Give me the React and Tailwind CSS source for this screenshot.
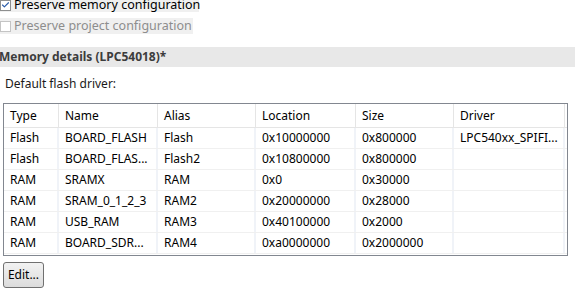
import { Check } from "lucide-react";

const columns = [
  { label: "Type", w: "w-[55px]" },
  { label: "Name", w: "w-[99px]" },
  { label: "Alias", w: "w-[98px]" },
  { label: "Location", w: "w-[100px]" },
  { label: "Size", w: "w-[98px]" },
  { label: "Driver", w: "w-[111px]" },
];

const rows = [
  ["Flash", "BOARD_FLASH", "Flash", "0x10000000", "0x800000", "LPC540xx_SPIFI..."],
  ["Flash", "BOARD_FLAS...", "Flash2", "0x10800000", "0x800000", ""],
  ["RAM", "SRAMX", "RAM", "0x0", "0x30000", ""],
  ["RAM", "SRAM_0_1_2_3", "RAM2", "0x20000000", "0x28000", ""],
  ["RAM", "USB_RAM", "RAM3", "0x40100000", "0x2000", ""],
  ["RAM", "BOARD_SDR...", "RAM4", "0xa0000000", "0x2000000", ""],
];

export default function App() {
  return (
    <div
      className="w-[575px] h-[304px] bg-white overflow-hidden text-[12px] leading-none text-black"
      style={{ fontFamily: '"Noto Sans", "Liberation Sans", sans-serif' }}
    >
      {/* checkbox options, first one scrolled partly out of view */}
      <div className="-mt-[2px] flex flex-col whitespace-nowrap text-[12.5px]">
        <div className="flex items-center gap-[3px] h-[14px] bg-[#f0f0f0] w-[199px]">
          <span className="w-[11px] h-[11px] shrink-0 border border-[#8e8f8f] flex items-center justify-center bg-white">
            <Check size={10} strokeWidth={3} className="text-[#2a5ba8]" />
          </span>
          <span>Preserve memory configuration</span>
        </div>
        <div className="mt-[6px] h-[16px] bg-[#f0f0f0] w-[193px] flex items-center gap-[3px]">
          <span className="w-[11px] h-[11px] shrink-0 border border-[#c4c4c4] bg-white" />
          <span className="text-[#8d8d8d]">Preserve project configuration</span>
        </div>
      </div>

      <div className="mt-[13px] h-[20px] bg-[#e8e8e8] flex items-center -ml-[1px] font-bold text-[#3c3c3c]">
        Memory details (LPC54018)*
      </div>

      <div className="mt-[11px] ml-[5px] text-[#1a1a1a]">Default flash driver:</div>

      <div className="mt-[13px] ml-[3px] w-[565px] h-[153px] border border-[#828790] overflow-hidden">
        <div className="flex h-[24px] border-b border-[#e5e5e5]">
          {columns.map((c) => (
            <div
              key={c.label}
              className={`${c.w} shrink-0 flex items-center pl-[6px] border-r border-[#e5e5e5]`}
            >
              {c.label}
            </div>
          ))}
        </div>
        {rows.map((r, ri) => (
          <div key={ri} className="flex h-[21px] border-b border-[#f0f0f0]">
            {r.map((cell, ci) => (
              <div
                key={ci}
                className={`${columns[ci].w} shrink-0 flex items-center pl-[6px] border-r-2 border-[#f0f3f8] whitespace-nowrap`}
              >
                {cell}
              </div>
            ))}
          </div>
        ))}
      </div>

      <button className="mt-[6px] ml-[3px] w-[41px] h-[26px] border border-[#707070] rounded-[3px] bg-gradient-to-b from-[#f2f2f2] to-[#dcdcdc] text-[12px] text-black flex items-center justify-center">
        Edit...
      </button>
    </div>
  );
}
